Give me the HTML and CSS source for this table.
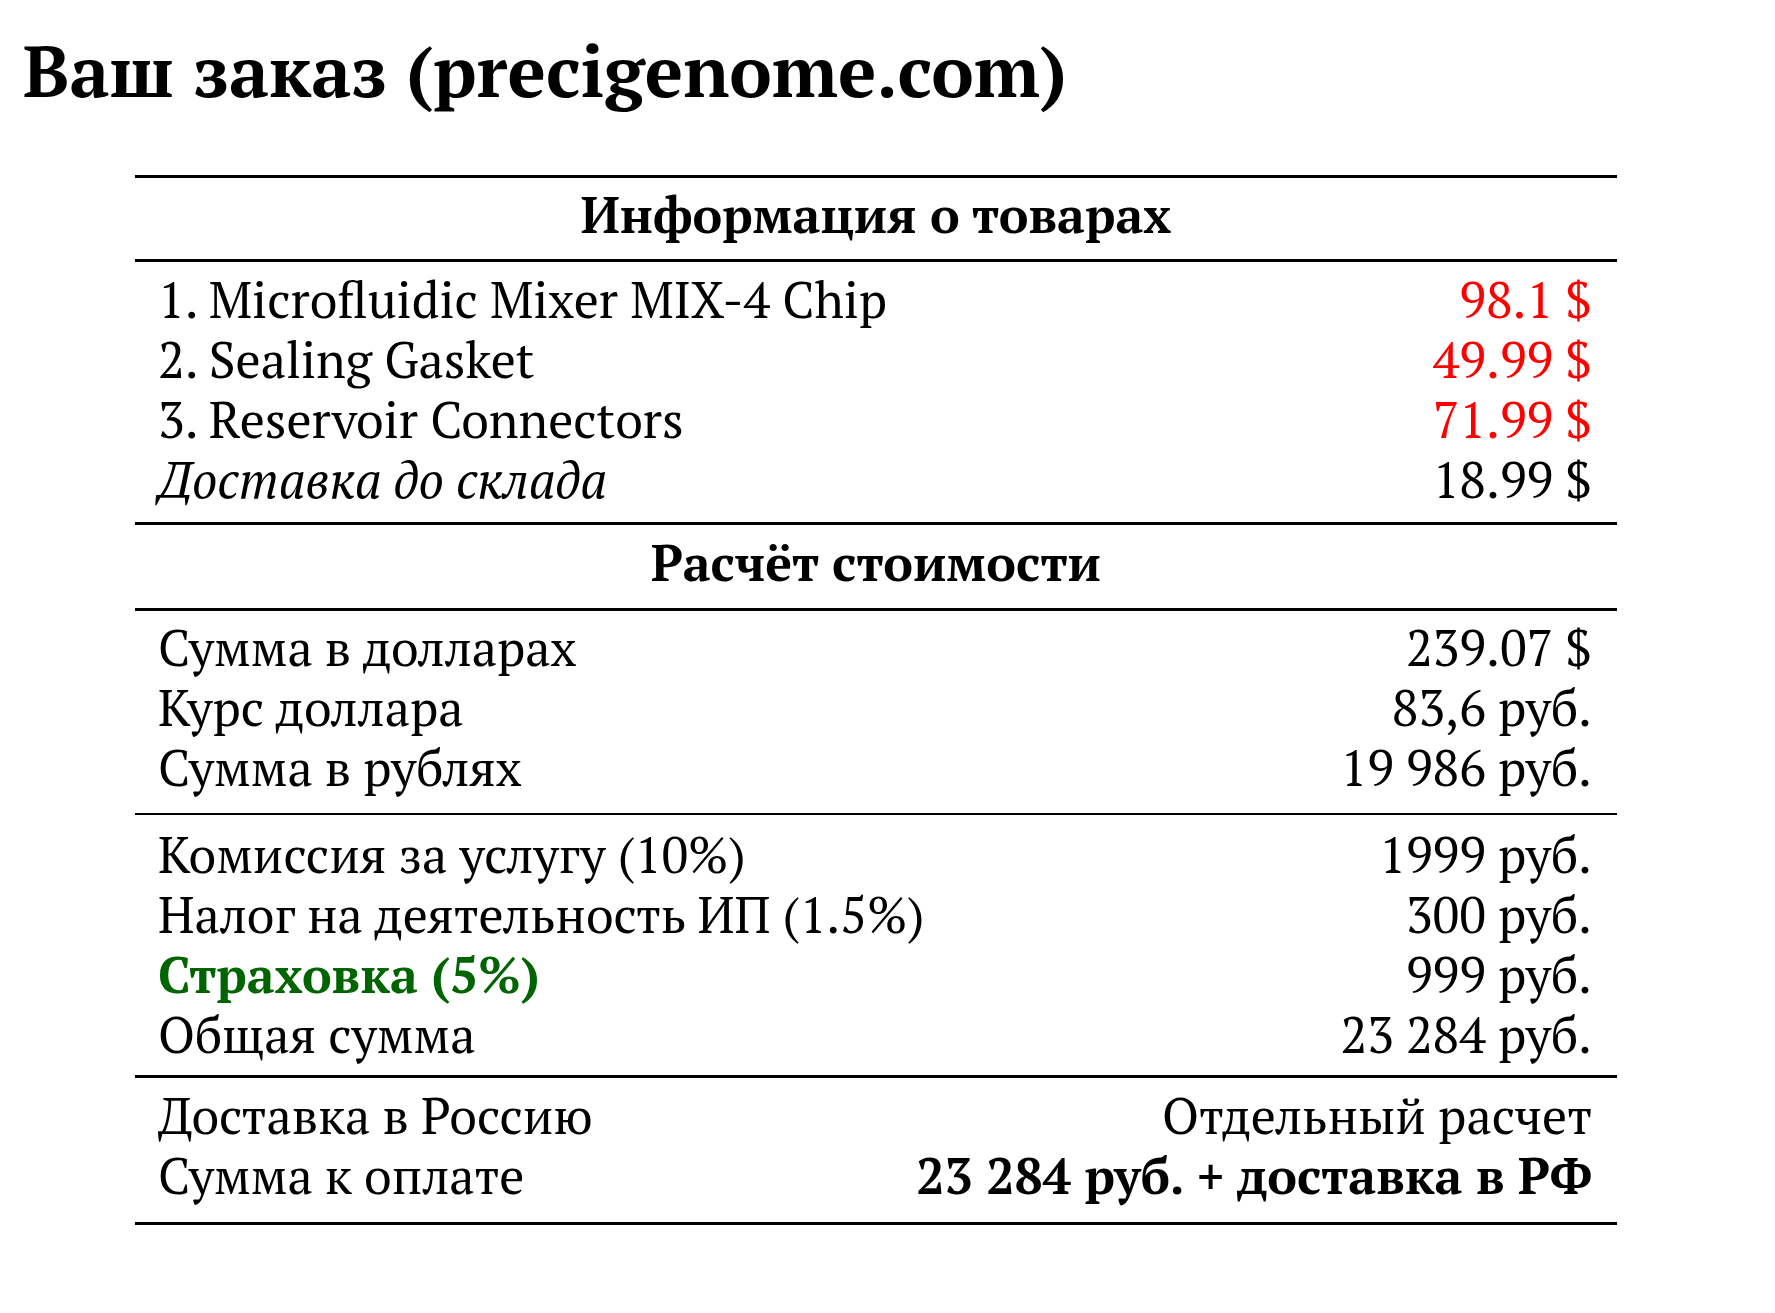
FILE: index.html
```html
<!DOCTYPE html>
<html lang="ru">
<head>
<meta charset="utf-8">
<title>Ваш заказ</title>
<link rel="stylesheet" href="styles.css">
</head>
<body>
<h1 class="title">Ваш заказ (precigenome.com)</h1>
<div class="table">
  <div class="head head-first">Информация о товарах</div>
  <div class="group g1">
    <div class="row"><span>1. Microfluidic Mixer MIX-4 Chip</span><span class="red">98.1 $</span></div>
    <div class="row"><span>2. Sealing Gasket</span><span class="red">49.99 $</span></div>
    <div class="row"><span>3. Reservoir Connectors</span><span class="red">71.99 $</span></div>
    <div class="row"><span class="it">Доставка до склада</span><span>18.99 $</span></div>
  </div>
  <div class="head head-second">Расчёт стоимости</div>
  <div class="group g2 thin">
    <div class="row"><span>Сумма в долларах</span><span>239.07 $</span></div>
    <div class="row"><span>Курс доллара</span><span>83,6 руб.</span></div>
    <div class="row"><span>Сумма в рублях</span><span>19 986 руб.</span></div>
  </div>
  <div class="group g3">
    <div class="row"><span>Комиссия за услугу (10%)</span><span>1999 руб.</span></div>
    <div class="row"><span>Налог на деятельность ИП (1.5%)</span><span>300 руб.</span></div>
    <div class="row"><span class="green">Страховка (5%)</span><span>999 руб.</span></div>
    <div class="row"><span>Общая сумма</span><span>23 284 руб.</span></div>
  </div>
  <div class="group g4 last">
    <div class="row"><span>Доставка в Россию</span><span>Отдельный расчет</span></div>
    <div class="row"><span>Сумма к оплате</span><span class="bold">23 284 руб. + доставка в РФ</span></div>
  </div>
</div>
</body>
</html>
```
FILE: styles.css
```css
html, body {
  margin: 0;
  padding: 0;
  background: #fff;
  color: #000;
}
body {
  font-family: "PT Serif", "Noto Serif", "DejaVu Serif", serif;
}
.title {
  margin: 0;
  padding: 35px 0 0 23px;
  font-size: 71.6px;
  line-height: 70px;
  font-weight: bold;
  white-space: nowrap;
}
.table {
  margin: 70px 0 0 135px;
  width: 1482px;
  border-top: 3px solid #000;
  border-bottom: 3px solid #000;
  font-size: 50px;
  line-height: 60px;
}
.head {
  text-align: center;
  font-weight: bold;
  border-bottom: 3px solid #000;
}
.head-first {
  padding-top: 6px;
  padding-bottom: 15px;
}
.head-second {
  padding-top: 7px;
  padding-bottom: 16px;
}
.group {
  padding: 0 25px 0 23px;
  border-bottom: 3px solid #000;
}
.group.thin {
  border-bottom-width: 2px;
}
.group.last {
  border-bottom: none;
}
.g1 { padding-top: 7px; padding-bottom: 13px; }
.g2 { padding-top: 6px; padding-bottom: 16px; }
.g3 { padding-top: 9px; padding-bottom: 11px; }
.g4 { padding-top: 7px; padding-bottom: 17px; }
.row {
  display: flex;
  justify-content: space-between;
  white-space: nowrap;
}
.red { color: #ff0000; }
.green { color: #006400; font-weight: bold; }
.bold { font-weight: bold; }
.it { font-style: italic; }
```
